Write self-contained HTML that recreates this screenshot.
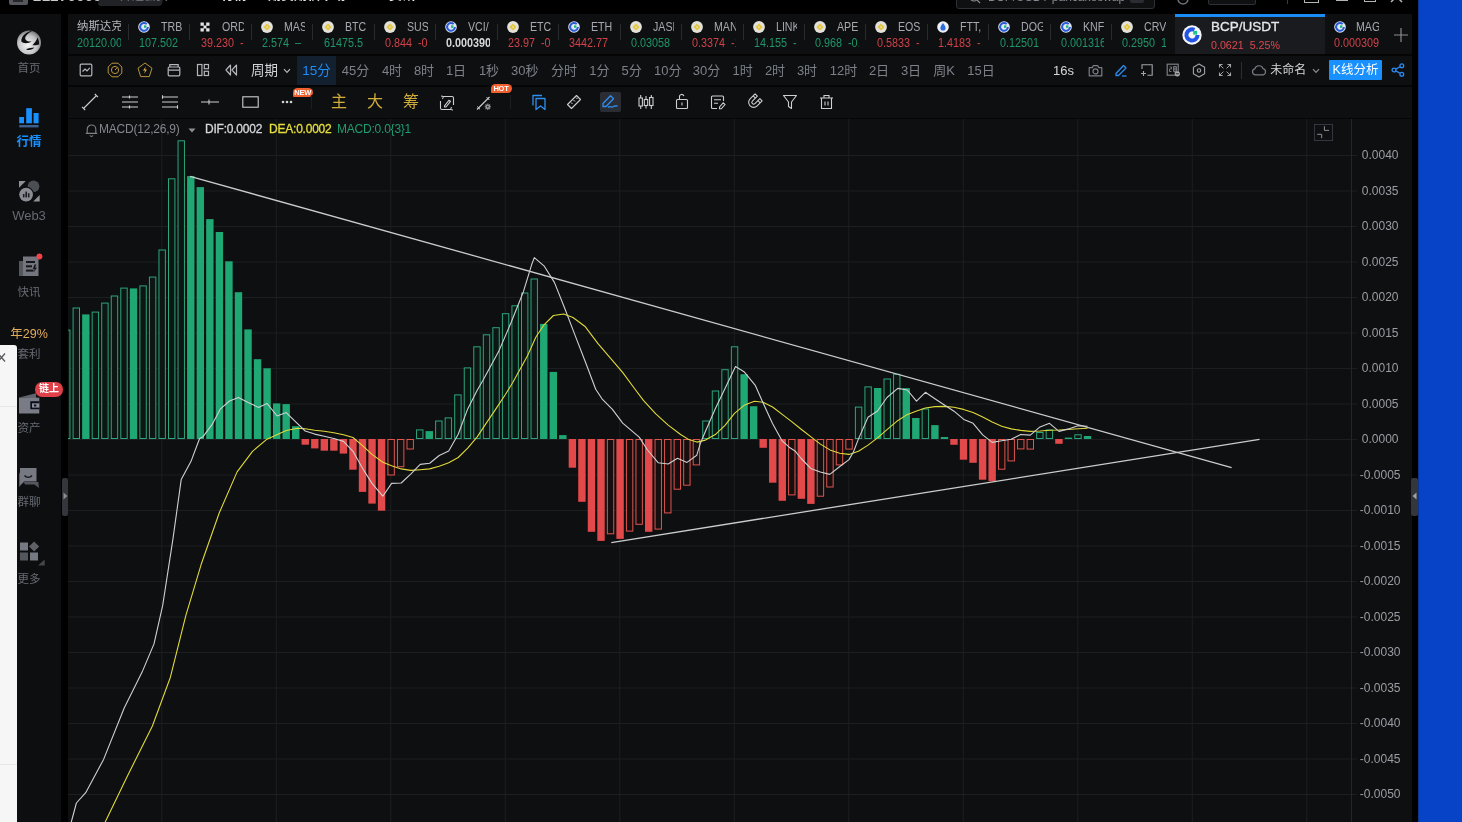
<!DOCTYPE html>
<html lang="zh-CN"><head><meta charset="utf-8"><title>MACD</title>
<style>
*{margin:0;padding:0;box-sizing:border-box}
html,body{width:1462px;height:822px;overflow:hidden;background:#000}
#wrap{position:absolute;left:0;top:0;width:1462px;height:822px;overflow:hidden;will-change:transform;transform:translateZ(0)}
body{position:relative;font-family:"Liberation Sans","Noto Sans CJK SC",sans-serif;color:#9b9ea5;font-size:12px}
.abs{position:absolute}
#side{position:absolute;left:0;top:13.5px;width:60.5px;height:808px;background:#0d0e10}
#main{position:absolute;left:68px;top:14px;width:1344px;height:808px;background:#0e0f11}
#blue{position:absolute;left:1418px;top:0;width:44px;height:822px;background:#0643c6;border-left:1.5px solid #0a3590}
.sl{position:absolute;left:0;width:58px;text-align:center;font-size:11.5px;margin-top:0.5px;color:#666a72;line-height:14px;white-space:nowrap}
.tab{position:absolute;top:14px;height:40px;overflow:hidden}
.tab .nm{position:absolute;top:4.5px;font-size:12.8px;color:#a6a9af;white-space:nowrap;line-height:16px;transform:scaleX(.83);transform-origin:0 50%}
.tab .pr{position:absolute;top:21.8px;font-size:12px;white-space:nowrap;line-height:14px;transform:scaleX(.9);transform-origin:0 50%}
.g{color:#1e9669}.r{color:#cf4249}.w{color:#d6d7da}
.dv{position:absolute;top:23.5px;width:1px;height:16.5px;background:#292b2f}
.per{position:absolute;top:56px;height:29px;line-height:29px;font-size:13px;color:#7d8189;white-space:nowrap;transform:translateX(-50%)}
.yl{position:absolute;left:1350.2px;width:60px;text-align:center;font-size:12px;line-height:16px;color:#9a9da3;white-space:nowrap}
.ic{position:absolute;overflow:visible}
</style></head><body><div id="wrap">
<div class="abs" style="left:9px;top:-13px;width:19px;height:18px;background:#55575c;border-radius:2px"></div><div class="abs" style="left:13px;top:-8px;width:10px;height:10px;background:#26272b"></div>
<div class="abs" style="left:33px;top:-11.6px;font-size:15px;font-weight:bold;color:#c8c9cc;line-height:16px;letter-spacing:0.3px;white-space:nowrap">21270008</div>
<div class="abs" style="left:100px;top:-14px;width:64px;height:20px;background:#202226;border-radius:3px;transform:skewX(-14deg)"></div>
<div class="abs" style="left:120px;top:-11px;font-size:12px;color:#7c7f86;line-height:14px;white-space:nowrap">开通会员</div>
<div class="abs" style="left:221px;top:-13px;font-size:13px;font-weight:bold;color:#e8e9eb;line-height:15px;white-space:nowrap">行情</div>
<div class="abs" style="left:268px;top:-13px;font-size:13px;font-weight:bold;color:#e8e9eb;line-height:15px;white-space:nowrap">期货期权市场</div>
<div class="abs" style="left:389px;top:-13px;font-size:13px;font-weight:bold;color:#e8e9eb;line-height:15px;white-space:nowrap">资讯</div>
<div class="abs" style="left:956px;top:-12px;width:199px;height:21px;border:1px solid #2e3035;border-radius:3px;background:#0f1012"></div>
<div class="abs" style="left:988px;top:-10px;font-size:12px;color:#85888f;line-height:14px;white-space:nowrap">BCP/USDT pancakeswap</div>
<div class="abs" style="left:1130px;top:-8px;width:14px;height:11px;background:#2a2c31;border-radius:2px"></div>
<svg class="ic" style="left:969px;top:-8px" width="12" height="12" viewBox="0 0 12 12"><circle cx="5" cy="5" r="4" stroke="#85888f" stroke-width="1.2" fill="none"/><path d="M8 8L11 11" stroke="#85888f" stroke-width="1.2"/></svg>
<svg class="ic" style="left:1175px;top:-10px" width="16" height="16" viewBox="0 0 16 16"><path d="M3 6V9A5 5 0 0 0 13 9V6" stroke="#6c6f76" stroke-width="1.5" fill="none"/><path d="M6 9.5H10" stroke="#6c6f76" stroke-width="1.3"/></svg>
<div class="abs" style="left:1208px;top:-12px;width:48px;height:17px;border:1px solid #2e3035;border-radius:2px;background:#0f1012"></div>
<div class="abs" style="left:1287px;top:0;width:1px;height:4px;background:#3a3c41"></div>
<div class="abs" style="left:1304px;top:-11px;width:15px;height:14px;border:1.5px solid #b4b5b8"></div>
<div class="abs" style="left:1336px;top:-0.5px;width:12px;height:1.5px;background:#b4b5b8"></div>
<div class="abs" style="left:1364px;top:-10px;width:12px;height:12px;border:1.5px solid #b4b5b8"></div>
<svg class="ic" style="left:1390px;top:-10.5px" width="13" height="13" viewBox="0 0 13 13"><path d="M1 1L12 12M12 1L1 12" stroke="#b4b5b8" stroke-width="1.5"/></svg>
<div id="main"></div>
<div class="abs" style="left:68px;top:54px;width:1344px;height:2px;background:#050506"></div>
<div class="abs" style="left:68px;top:84.5px;width:1344px;height:2px;background:#050506"></div>
<div class="abs" style="left:68px;top:118px;width:1344px;height:1px;background:#050506"></div>
<div id="side">
<svg class="ic" style="left:17px;top:16px" width="24" height="25" viewBox="0 0 24 25">
<defs><radialGradient id="lg" cx="0.45" cy="0.6" r="0.6"><stop offset="0" stop-color="#f4f4f4"/><stop offset="0.65" stop-color="#c4c4c6"/><stop offset="1" stop-color="#77787b"/></radialGradient></defs>
<circle cx="12" cy="12.5" r="12" fill="url(#lg)"/>
<path d="M16.8 0.2 C10 1.2 3.6 6 4.4 11.6 C6 13.8 11.5 13.8 14.5 11.6 C9.5 11.8 7.2 9.6 8.6 6.6 C10 4 13 1.6 16.8 0.2Z" fill="#0d0e10"/>
<path d="M20.6 7.6 C19.4 10.8 17.6 13.4 15.4 15.2 C18 15.6 20.6 15.2 22.2 14.2 C22.2 12 21.6 9.8 20.6 7.6Z" fill="#0d0e10"/>
<path d="M9 19.4 C11.5 18.2 14.5 18 17.4 17.6 C15.8 19.6 12 20.6 9 19.4Z" fill="#0d0e10"/>
</svg>
<div class="sl" style="top:47px">首页</div>
<svg class="ic" style="left:19px;top:94px" width="20" height="20" viewBox="0 0 20 20">
<rect x="0.2" y="9" width="4.8" height="6.3" fill="#1890ff"/><rect x="7.2" y="0.2" width="5.7" height="15.1" fill="#1890ff"/><rect x="14.6" y="5" width="5" height="10.3" fill="#1890ff"/>
<rect x="0.2" y="17" width="19.4" height="2.4" fill="#3d5f8f"/></svg>
<div class="sl" style="top:121px;color:#1890ff;font-weight:bold;font-size:12.5px">行情</div>
<svg class="ic" style="left:18.7px;top:167.1px" width="21" height="21" viewBox="0 0 21 21">
<path d="M0 0H6.8L0 6.8Z" fill="#8f9095"/><path d="M20.7 20.5H14.2L20.7 14Z" fill="#8f9095"/>
<circle cx="14.5" cy="5.3" r="5.9" fill="#4b4e53"/><circle cx="7.1" cy="13.6" r="8" fill="#0d0e10"/><circle cx="7.1" cy="13.6" r="6.9" fill="#8b8d95"/>
<rect x="3.9" y="13" width="1.6" height="3.4" fill="#1c1d21"/><rect x="6.4" y="10.6" width="1.6" height="5.8" fill="#1c1d21"/><rect x="8.9" y="12.2" width="1.6" height="4.2" fill="#1c1d21"/>
</svg>
<div class="sl" style="top:195px;font-size:13px">Web3</div>
<svg class="ic" style="left:19px;top:241px" width="24" height="22" viewBox="0 0 24 22">
<rect x="0" y="6" width="8" height="15" fill="#55575f"/><rect x="4" y="1.5" width="15.5" height="19.5" fill="#74767f"/>
<rect x="7" y="6" width="9" height="2" fill="#15161a"/><rect x="7" y="10.3" width="6" height="2" fill="#15161a"/><rect x="7" y="14.6" width="7.5" height="2" fill="#15161a"/>
<path d="M15.5 9.5L13.8 14H15.6L14.6 17.5L18 12.5H16L17.4 9.5Z" fill="#15161a"/>
<circle cx="20.4" cy="1.6" r="3" fill="#f0434a"/></svg>
<div class="sl" style="top:271px">快讯</div>
<div class="sl" style="top:313px;color:#e4ad5a;font-size:12.5px">年29%</div>
<div class="sl" style="top:333px">套利</div>
<svg class="ic" style="left:18.9px;top:379px" width="21" height="21" viewBox="0 0 21 21">
<path d="M0 4.6L17 0.3V5Z" fill="#62646d"/><rect x="0" y="4.6" width="20.3" height="15.9" fill="#797b85"/>
<rect x="11.3" y="8.2" width="9" height="8" fill="#0c0e1c"/><rect x="13" y="10.3" width="7.3" height="4.3" fill="#8a8c96"/><rect x="15" y="11.5" width="2.3" height="1.9" fill="#0c0e1c"/></svg>
<div class="sl" style="top:407px">资产</div>
<div class="abs" style="left:35px;top:368.7px;width:28px;height:14.5px;border-radius:7.2px;background:#e04048;color:#fff;font-size:10px;font-weight:bold;line-height:14px;text-align:center;z-index:5">链上</div>
<svg class="ic" style="left:19px;top:454px" width="20" height="20" viewBox="0 0 20 20">
<path d="M0 4V19L5 14H19.5V16L20 20L15.5 16.5H6" fill="#55575f"/>
<path d="M1 0H17.5V13.5H5L1 17Z" fill="#777982"/>
<path d="M5.5 7.5C7.5 10 11 10 13 7.5" stroke="#15161a" stroke-width="1.4" fill="none"/></svg>
<div class="sl" style="top:481px">群聊</div>
<svg class="ic" style="left:19px;top:528px" width="26" height="24" viewBox="0 0 26 24">
<rect x="1" y="0.5" width="8" height="8" fill="#777982"/><rect x="1" y="10.5" width="8" height="8" fill="#55575f"/><rect x="11" y="10.5" width="8" height="8" fill="#777982"/>
<path d="M15.1 -0.6L20.2 4.5L15.1 9.6L10 4.5Z" fill="#5e6066"/>
<path d="M25.7 17.5V23.4H19Z" fill="#45474d"/></svg>
<div class="sl" style="top:558px">更多</div>
</div>
<div class="abs" style="left:0;top:345px;width:17px;height:477px;background:#f6f6f7;border-top-right-radius:3px;z-index:6">
<svg class="ic" style="left:-2px;top:7px" width="8" height="12" viewBox="0 0 8 12"><path d="M0 1.5L7 9.5M7 1.5L0 9.5" stroke="#55575c" stroke-width="1.3" fill="none"/></svg>
<div class="abs" style="left:0;top:61px;width:17px;height:1px;background:#e6e6e8"></div>
<div class="abs" style="left:0;top:419px;width:17px;height:1px;background:#e6e6e8"></div>
</div>
<div class="abs" style="left:62px;top:478px;width:6px;height:38px;background:#34363c;border-radius:2px;z-index:7"><svg class="ic" style="left:1px;top:14px" width="5" height="8" viewBox="0 0 5 8"><path d="M0.5 0.5L4.5 4L0.5 7.5Z" fill="#8a8c92"/></svg></div>
<div class="abs" style="left:1411px;top:478px;width:7px;height:38px;background:#34363c;border-radius:2px;z-index:7"><svg class="ic" style="left:1px;top:14px" width="5" height="8" viewBox="0 0 5 8"><path d="M4.5 0.5L0.5 4L4.5 7.5Z" fill="#a0a2a8"/></svg></div>
<div class="tab" style="left:77px;width:43.7px"><div class="nm" style="left:0;top:3.8px;font-size:11.4px;color:#b4b6bb;transform:none">纳斯达克100</div><div class="pr g" style="left:0">20120.00</div></div>
<div class="dv" style="left:128.0px"></div>
<svg class="ic" style="left:138.0px;top:21.0px" width="12" height="12" viewBox="0 0 12 12"><circle cx="6" cy="6" r="5.8" fill="#dfe6f5"/><path d="M8.7 3.1A3.9 3.9 0 1 0 9.9 6" stroke="#2a5bd8" stroke-width="2" fill="none"/><rect x="6" y="4.4" width="2.4" height="2.4" fill="#1fb37d"/></svg>
<div class="tab" style="left:128.0px;width:54.5px"><div class="nm" style="left:33px">TRB</div><div class="pr g" style="left:11.3px">107.502</div></div>
<div class="dv" style="left:189.4px"></div>
<svg class="ic" style="left:199.4px;top:21.0px" width="12" height="12" viewBox="0 0 12 12"><path d="M1.5 1.5H4.8V4.8H1.5ZM7.2 1.5H10.5V4.8H7.2ZM1.5 7.2H4.8V10.5H1.5ZM7.2 7.2H10.5V10.5H7.2ZM4.5 4.5H7.5V7.5H4.5Z" fill="#e4e5e8"/></svg>
<div class="tab" style="left:189.4px;width:54.5px"><div class="nm" style="left:33px">ORD</div><div class="pr r" style="left:11.3px">39.230 &nbsp;-</div></div>
<div class="dv" style="left:250.9px"></div>
<svg class="ic" style="left:260.9px;top:21.0px" width="12" height="12" viewBox="0 0 12 12"><circle cx="6" cy="6" r="5.9" fill="#e3e1da"/><path d="M6 2.4L9.6 6L6 9.6L2.4 6Z" fill="#e2c640"/><path d="M6 4.9L7.1 6L6 7.1L4.9 6Z" fill="#efe6b0"/></svg>
<div class="tab" style="left:250.9px;width:54.5px"><div class="nm" style="left:33px">MASK</div><div class="pr g" style="left:11.3px">2.574 &nbsp;–</div></div>
<div class="dv" style="left:312.4px"></div>
<svg class="ic" style="left:322.4px;top:21.0px" width="12" height="12" viewBox="0 0 12 12"><circle cx="6" cy="6" r="5.9" fill="#e3e1da"/><path d="M6 2.4L9.6 6L6 9.6L2.4 6Z" fill="#e2c640"/><path d="M6 4.9L7.1 6L6 7.1L4.9 6Z" fill="#efe6b0"/></svg>
<div class="tab" style="left:312.4px;width:54.5px"><div class="nm" style="left:33px">BTC</div><div class="pr g" style="left:11.3px">61475.5</div></div>
<div class="dv" style="left:373.8px"></div>
<svg class="ic" style="left:383.8px;top:21.0px" width="12" height="12" viewBox="0 0 12 12"><circle cx="6" cy="6" r="5.9" fill="#e3e1da"/><path d="M6 2.4L9.6 6L6 9.6L2.4 6Z" fill="#e2c640"/><path d="M6 4.9L7.1 6L6 7.1L4.9 6Z" fill="#efe6b0"/></svg>
<div class="tab" style="left:373.8px;width:54.5px"><div class="nm" style="left:33px">SUSHI</div><div class="pr r" style="left:11.3px">0.844 &nbsp;-0.5</div></div>
<div class="dv" style="left:435.2px"></div>
<svg class="ic" style="left:445.2px;top:21.0px" width="12" height="12" viewBox="0 0 12 12"><circle cx="6" cy="6" r="5.8" fill="#dfe6f5"/><path d="M8.7 3.1A3.9 3.9 0 1 0 9.9 6" stroke="#2a5bd8" stroke-width="2" fill="none"/><rect x="6" y="4.4" width="2.4" height="2.4" fill="#1fb37d"/></svg>
<div class="tab" style="left:435.2px;width:54.5px"><div class="nm" style="left:33px">VCI/</div><div class="pr w" style="left:11.3px;font-weight:bold">0.000390</div></div>
<div class="dv" style="left:496.7px"></div>
<svg class="ic" style="left:506.7px;top:21.0px" width="12" height="12" viewBox="0 0 12 12"><circle cx="6" cy="6" r="5.9" fill="#e3e1da"/><path d="M6 2.4L9.6 6L6 9.6L2.4 6Z" fill="#e2c640"/><path d="M6 4.9L7.1 6L6 7.1L4.9 6Z" fill="#efe6b0"/></svg>
<div class="tab" style="left:496.7px;width:54.5px"><div class="nm" style="left:33px">ETC,</div><div class="pr r" style="left:11.3px">23.97 &nbsp;-0.5</div></div>
<div class="dv" style="left:558.2px"></div>
<svg class="ic" style="left:568.2px;top:21.0px" width="12" height="12" viewBox="0 0 12 12"><circle cx="6" cy="6" r="5.8" fill="#dfe6f5"/><path d="M8.7 3.1A3.9 3.9 0 1 0 9.9 6" stroke="#2a5bd8" stroke-width="2" fill="none"/><rect x="6" y="4.4" width="2.4" height="2.4" fill="#1fb37d"/></svg>
<div class="tab" style="left:558.2px;width:54.5px"><div class="nm" style="left:33px">ETH</div><div class="pr r" style="left:11.3px">3442.77</div></div>
<div class="dv" style="left:619.6px"></div>
<svg class="ic" style="left:629.6px;top:21.0px" width="12" height="12" viewBox="0 0 12 12"><circle cx="6" cy="6" r="5.9" fill="#e3e1da"/><path d="M6 2.4L9.6 6L6 9.6L2.4 6Z" fill="#e2c640"/><path d="M6 4.9L7.1 6L6 7.1L4.9 6Z" fill="#efe6b0"/></svg>
<div class="tab" style="left:619.6px;width:54.5px"><div class="nm" style="left:33px">JASM</div><div class="pr g" style="left:11.3px">0.03058</div></div>
<div class="dv" style="left:681.1px"></div>
<svg class="ic" style="left:691.1px;top:21.0px" width="12" height="12" viewBox="0 0 12 12"><circle cx="6" cy="6" r="5.9" fill="#e3e1da"/><path d="M6 2.4L9.6 6L6 9.6L2.4 6Z" fill="#e2c640"/><path d="M6 4.9L7.1 6L6 7.1L4.9 6Z" fill="#efe6b0"/></svg>
<div class="tab" style="left:681.1px;width:54.5px"><div class="nm" style="left:33px">MANA</div><div class="pr r" style="left:11.3px">0.3374 &nbsp;-1</div></div>
<div class="dv" style="left:742.5px"></div>
<svg class="ic" style="left:752.5px;top:21.0px" width="12" height="12" viewBox="0 0 12 12"><circle cx="6" cy="6" r="5.9" fill="#e3e1da"/><path d="M6 2.4L9.6 6L6 9.6L2.4 6Z" fill="#e2c640"/><path d="M6 4.9L7.1 6L6 7.1L4.9 6Z" fill="#efe6b0"/></svg>
<div class="tab" style="left:742.5px;width:54.5px"><div class="nm" style="left:33px">LINK</div><div class="pr g" style="left:11.3px">14.155 &nbsp;-</div></div>
<div class="dv" style="left:804.0px"></div>
<svg class="ic" style="left:814.0px;top:21.0px" width="12" height="12" viewBox="0 0 12 12"><circle cx="6" cy="6" r="5.9" fill="#e3e1da"/><path d="M6 2.4L9.6 6L6 9.6L2.4 6Z" fill="#e2c640"/><path d="M6 4.9L7.1 6L6 7.1L4.9 6Z" fill="#efe6b0"/></svg>
<div class="tab" style="left:804.0px;width:54.5px"><div class="nm" style="left:33px">APE</div><div class="pr g" style="left:11.3px">0.968 &nbsp;-0.5</div></div>
<div class="dv" style="left:865.4px"></div>
<svg class="ic" style="left:875.4px;top:21.0px" width="12" height="12" viewBox="0 0 12 12"><circle cx="6" cy="6" r="5.9" fill="#e3e1da"/><path d="M6 2.4L9.6 6L6 9.6L2.4 6Z" fill="#e2c640"/><path d="M6 4.9L7.1 6L6 7.1L4.9 6Z" fill="#efe6b0"/></svg>
<div class="tab" style="left:865.4px;width:54.5px"><div class="nm" style="left:33px">EOS</div><div class="pr r" style="left:11.3px">0.5833 &nbsp;-</div></div>
<div class="dv" style="left:926.9px"></div>
<svg class="ic" style="left:936.9px;top:21.0px" width="12" height="12" viewBox="0 0 12 12"><circle cx="6" cy="6" r="5.8" fill="#eef1f7"/><path d="M6 2C7.2 4 8.6 5.2 8.6 7A2.6 2.6 0 0 1 3.4 7C3.4 5.2 4.8 4 6 2Z" fill="#2d6be0"/></svg>
<div class="tab" style="left:926.9px;width:54.5px"><div class="nm" style="left:33px">FTT,</div><div class="pr r" style="left:11.3px">1.4183 &nbsp;-1</div></div>
<div class="dv" style="left:988.3px"></div>
<svg class="ic" style="left:998.3px;top:21.0px" width="12" height="12" viewBox="0 0 12 12"><circle cx="6" cy="6" r="5.8" fill="#dfe6f5"/><path d="M8.7 3.1A3.9 3.9 0 1 0 9.9 6" stroke="#2a5bd8" stroke-width="2" fill="none"/><rect x="6" y="4.4" width="2.4" height="2.4" fill="#1fb37d"/></svg>
<div class="tab" style="left:988.3px;width:54.5px"><div class="nm" style="left:33px">DOGE</div><div class="pr g" style="left:11.3px">0.12501</div></div>
<div class="dv" style="left:1049.8px"></div>
<svg class="ic" style="left:1059.8px;top:21.0px" width="12" height="12" viewBox="0 0 12 12"><circle cx="6" cy="6" r="5.8" fill="#dfe6f5"/><path d="M8.7 3.1A3.9 3.9 0 1 0 9.9 6" stroke="#2a5bd8" stroke-width="2" fill="none"/><rect x="6" y="4.4" width="2.4" height="2.4" fill="#1fb37d"/></svg>
<div class="tab" style="left:1049.8px;width:54.5px"><div class="nm" style="left:33px">KNF</div><div class="pr g" style="left:11.3px">0.001316</div></div>
<div class="dv" style="left:1111.2px"></div>
<svg class="ic" style="left:1121.2px;top:21.0px" width="12" height="12" viewBox="0 0 12 12"><circle cx="6" cy="6" r="5.9" fill="#e3e1da"/><path d="M6 2.4L9.6 6L6 9.6L2.4 6Z" fill="#e2c640"/><path d="M6 4.9L7.1 6L6 7.1L4.9 6Z" fill="#efe6b0"/></svg>
<div class="tab" style="left:1111.2px;width:54.5px"><div class="nm" style="left:33px">CRV</div><div class="pr g" style="left:11.3px">0.2950 &nbsp;1</div></div>
<div class="abs" style="left:1175px;top:14px;width:150px;height:40px;background:#191b1f"></div>
<div class="abs" style="left:1175px;top:13.6px;width:150px;height:3px;background:#1a8cf5"></div>
<svg class="ic" style="left:1182px;top:25px" width="20" height="20" viewBox="0 0 20 20"><circle cx="10" cy="10" r="9.7" fill="#f4f6fa"/><path d="M12.4 4.9A5.6 5.6 0 1 0 15.6 10" stroke="#2354e6" stroke-width="4" fill="none"/><rect x="11.2" y="5.8" width="3.8" height="3.8" fill="#17c98a"/></svg>
<div class="abs" style="left:1211px;top:19px;font-size:13.5px;color:#e6e7ea;line-height:16px;white-space:nowrap;-webkit-text-stroke:0.3px #e6e7ea">BCP/USDT</div>
<div class="abs" style="left:1211px;top:38px;font-size:11.5px;color:#e0474e;line-height:14px;white-space:nowrap;transform:scaleX(.93);transform-origin:0 50%">0.0621&nbsp; 5.25%</div>
<svg class="ic" style="left:1334.0px;top:21.0px" width="12" height="12" viewBox="0 0 12 12"><circle cx="6" cy="6" r="5.8" fill="#dfe6f5"/><path d="M8.7 3.1A3.9 3.9 0 1 0 9.9 6" stroke="#2a5bd8" stroke-width="2" fill="none"/><rect x="6" y="4.4" width="2.4" height="2.4" fill="#1fb37d"/></svg>
<div class="tab" style="left:1325px;width:53.6px"><div class="nm" style="left:31px">MAGA</div><div class="pr r" style="left:9px">0.0003095</div></div>
<svg class="ic" style="left:1393px;top:27px" width="16" height="16" viewBox="0 0 16 16"><path d="M8 1V15M1 8H15" stroke="#8a8d94" stroke-width="1.2"/></svg>
<svg class="ic" style="left:79.0px;top:63.3px" width="14" height="14" viewBox="0 0 14 14"><rect x="1.2" y="1.2" width="11.6" height="11.6" rx="1" stroke="#b4b6bb" stroke-width="1.2" fill="none"/><path d="M3.5 8.5L6 6L8 7.8L10.8 4.8" stroke="#b4b6bb" stroke-width="1.2" fill="none"/></svg>
<svg class="ic" style="left:107.0px;top:62.3px" width="16" height="16" viewBox="0 0 16 16"><path d="M5 1.2H11L14.8 5V11L11 14.8H5L1.2 11V5Z" stroke="#b8943a" stroke-width="1" fill="none"/><circle cx="8" cy="8" r="3.6" stroke="#b8943a" stroke-width="1" fill="none"/><path d="M8 8L10 5.8" stroke="#b8943a" stroke-width="1" fill="none"/></svg>
<svg class="ic" style="left:137.0px;top:62.3px" width="16" height="16" viewBox="0 0 16 16"><path d="M8 1L15 6.2L12.3 14.6H3.7L1 6.2Z" stroke="#b8943a" stroke-width="1" fill="none" stroke-linejoin="round"/><path d="M8.8 4.5L6 8.6H8L7.2 11.8L10 7.6H8Z" fill="#e0b244"/></svg>
<svg class="ic" style="left:167.0px;top:63.3px" width="14" height="14" viewBox="0 0 14 14"><rect x="1.2" y="4" width="11.6" height="8.8" rx="1" stroke="#b4b6bb" stroke-width="1.2" fill="none"/><path d="M2.8 4V1.6H11.2V4M1.2 7.2H12.8" stroke="#b4b6bb" stroke-width="1.2" fill="none"/></svg>
<svg class="ic" style="left:195.5px;top:63.3px" width="14" height="14" viewBox="0 0 14 14"><rect x="1.5" y="1.5" width="4.4" height="11" stroke="#b4b6bb" stroke-width="1.2" fill="none"/><rect x="8.3" y="1.5" width="4.2" height="4.2" stroke="#b4b6bb" stroke-width="1.2" fill="none"/><rect x="8.3" y="8.3" width="4.2" height="4.2" stroke="#b4b6bb" stroke-width="1.2" fill="none"/></svg>
<svg class="ic" style="left:224.0px;top:63.3px" width="14" height="14" viewBox="0 0 14 14"><path d="M6.5 2L2 7L6.5 12ZM12.5 2L8 7L12.5 12Z" stroke="#b4b6bb" stroke-width="1.2" fill="none" stroke-linejoin="round"/></svg>
<div class="per" style="left:264.5px;color:#d3d5d9;font-size:13.5px">周期</div>
<svg class="ic" style="left:283.0px;top:67.8px" width="8" height="6" viewBox="0 0 8 6"><path d="M1 1.2L4 4.4L7 1.2" stroke="#b4b6bb" stroke-width="1.2" fill="none"/></svg>
<div class="abs" style="left:297px;top:56px;width:39px;height:29px;background:#13202f"></div>
<div class="per" style="left:316.5px;color:#1e8df5;font-size:13.5px">15分</div>
<div class="per" style="left:355.6px">45分</div>
<div class="per" style="left:392px">4时</div>
<div class="per" style="left:424px">8时</div>
<div class="per" style="left:456px">1日</div>
<div class="per" style="left:489px">1秒</div>
<div class="per" style="left:524.7px">30秒</div>
<div class="per" style="left:563.9px">分时</div>
<div class="per" style="left:599.4px">1分</div>
<div class="per" style="left:631.6px">5分</div>
<div class="per" style="left:667.7px">10分</div>
<div class="per" style="left:706.5px">30分</div>
<div class="per" style="left:742.6px">1时</div>
<div class="per" style="left:775px">2时</div>
<div class="per" style="left:807px">3时</div>
<div class="per" style="left:843.5px">12时</div>
<div class="per" style="left:879px">2日</div>
<div class="per" style="left:911px">3日</div>
<div class="per" style="left:944px">周K</div>
<div class="per" style="left:981px">15日</div>
<div class="per" style="left:1063.5px;color:#d5d7da;font-size:13px">16s</div>
<svg class="ic" style="left:1088.2px;top:63.8px" width="15" height="13" viewBox="0 0 15 13"><path d="M1.2 3.6H4.2L5.4 1.6H9.6L10.8 3.6H13.8V11.8H1.2Z" stroke="#7a7d85" stroke-width="1.2" fill="none" stroke-linejoin="round"/><circle cx="7.5" cy="7.4" r="2.5" stroke="#7a7d85" stroke-width="1.2" fill="none"/></svg>
<svg class="ic" style="left:1114.0px;top:63.3px" width="14" height="14" viewBox="0 0 14 14"><path d="M2 10.5L9.5 2.5L12 5L4.5 12.5H2Z" stroke="#2b8cf0" stroke-width="1.3" fill="none" stroke-linejoin="round"/><path d="M8 13H12.5" stroke="#2b8cf0" stroke-width="1.3" fill="none"/></svg>
<svg class="ic" style="left:1139.8px;top:63.3px" width="14" height="14" viewBox="0 0 14 14"><path d="M2 6V1.8H12.2V12.2H7.5" stroke="#a2a4aa" stroke-width="1.1" fill="none"/><path d="M3.5 8V13M1 10.5H6" stroke="#a2a4aa" stroke-width="1.1" fill="none"/></svg>
<svg class="ic" style="left:1165.5px;top:63.3px" width="15" height="14" viewBox="0 0 15 14"><rect x="1.2" y="1.2" width="11" height="11" stroke="#7a7d85" stroke-width="1.2" fill="none"/><path d="M3.5 4H5.5V6H3.5V8.5H5.5M7.5 3.5H10.5V8.5H7.5ZM7.5 6H10.5M9 3V10" stroke="#7a7d85" stroke-width="0.9" fill="none"/><circle cx="11.3" cy="10.8" r="2.6" fill="#a9abb0"/><rect x="9.8" y="10.3" width="3" height="1" fill="#222"/></svg>
<svg class="ic" style="left:1191.8px;top:62.8px" width="14" height="15" viewBox="0 0 14 15"><path d="M7 1L12.6 4.2V10.8L7 14L1.4 10.8V4.2Z" stroke="#a2a4aa" stroke-width="1.1" fill="none" stroke-linejoin="round"/><circle cx="7" cy="7.5" r="1.7" stroke="#a2a4aa" stroke-width="1.1" fill="none"/></svg>
<svg class="ic" style="left:1218.0px;top:63.3px" width="14" height="14" viewBox="0 0 14 14"><path d="M1.5 4.6V1.5H4.6M9.4 1.5H12.5V4.6M12.5 9.4V12.5H9.4M4.6 12.5H1.5V9.4" stroke="#a2a4aa" stroke-width="1.1" fill="none"/><path d="M5.4 5.4L2 2M8.6 5.4L12 2M8.6 8.6L12 12M5.4 8.6L2 12" stroke="#a2a4aa" stroke-width="1"/></svg>
<div class="abs" style="left:1241px;top:62px;width:1px;height:17px;background:#2c2e33"></div>
<svg class="ic" style="left:1250.5px;top:63.8px" width="16" height="12" viewBox="0 0 16 12"><path d="M4.2 10.8A3 3 0 0 1 3.8 4.9A4.3 4.3 0 0 1 12 4.6A3.2 3.2 0 0 1 12.2 10.8Z" stroke="#7a7d85" stroke-width="1.2" fill="none" stroke-linejoin="round"/></svg>
<div class="per" style="left:1288.3px;color:#d3d5d9;font-size:12px">未命名</div>
<svg class="ic" style="left:1312.0px;top:67.8px" width="8" height="6" viewBox="0 0 8 6"><path d="M1 1.2L4 4.4L7 1.2" stroke="#8d9097" stroke-width="1.2" fill="none"/></svg>
<div class="abs" style="left:1329px;top:60px;width:53px;height:19.5px;background:#1890ff;border-radius:1px;color:#fff;font-size:12.5px;line-height:21px;text-align:center;white-space:nowrap">K线分析</div>
<svg class="ic" style="left:1391.0px;top:63.3px" width="14" height="14" viewBox="0 0 14 14"><circle cx="10.8" cy="2.8" r="1.9" stroke="#2b8cf0" stroke-width="1.3" fill="none"/><circle cx="10.8" cy="11.2" r="1.9" stroke="#2b8cf0" stroke-width="1.3" fill="none"/><circle cx="3" cy="7" r="1.9" stroke="#2b8cf0" stroke-width="1.3" fill="none"/><path d="M4.7 6.1L9.1 3.7M4.7 7.9L9.1 10.3" stroke="#2b8cf0" stroke-width="1.3" fill="none"/></svg>
<svg class="ic" style="left:81.4px;top:93.0px" width="18" height="18" viewBox="0 0 18 18"><path d="M2.5 15.5L15.5 2.5" stroke="#cdcfd3" stroke-width="1.1" fill="none"/><path d="M1 13.8L4.2 17M13.8 1L17 4.2" stroke="#cdcfd3" stroke-width="1.1" fill="none"/></svg>
<svg class="ic" style="left:121.0px;top:95.0px" width="18" height="14" viewBox="0 0 18 14"><path d="M1 2H17M1 7H17M1 12H17" stroke="#cdcfd3" stroke-width="1.1" fill="none"/><path d="M8.5 0.5V3.5M8.5 10.5V13.5" stroke="#cdcfd3" stroke-width="1.1" fill="none"/></svg>
<svg class="ic" style="left:161.0px;top:95.0px" width="18" height="14" viewBox="0 0 18 14"><path d="M1 2H17M1 7H17M1 12H17" stroke="#cdcfd3" stroke-width="1.1" fill="none"/><path d="M1.5 0.3V3.7M16.5 10.3V13.7" stroke="#cdcfd3" stroke-width="1.1" fill="none"/></svg>
<svg class="ic" style="left:201.0px;top:98.0px" width="18" height="8" viewBox="0 0 18 8"><path d="M0 4H18M8 1.5V6.5" stroke="#cdcfd3" stroke-width="1.1" fill="none"/></svg>
<svg class="ic" style="left:241.5px;top:96.3px" width="17" height="12" viewBox="0 0 17 12"><rect x="0.8" y="0.8" width="15.4" height="10.4" stroke="#cdcfd3" stroke-width="1.1" fill="none"/></svg>
<svg class="ic" style="left:281.0px;top:100.0px" width="12" height="4" viewBox="0 0 12 4"><circle cx="2" cy="2" r="1.3" fill="#cfd1d5"/><circle cx="6" cy="2" r="1.3" fill="#cfd1d5"/><circle cx="10" cy="2" r="1.3" fill="#cfd1d5"/></svg>
<div class="abs" style="left:292.5px;top:87.5px;width:20.5px;height:9px;border-radius:4.5px 4.5px 4.5px 1px;background:#f2602f;color:#fff;font-size:7.5px;font-weight:bold;line-height:9px;text-align:center;letter-spacing:-0.2px">NEW</div>
<div class="abs" style="left:311px;top:95px;width:1px;height:14px;background:#1d1f23"></div>
<div class="abs" style="left:330px;top:91px;width:18px;text-align:center;font-size:16px;line-height:22px;color:#d0ac3a">主</div>
<div class="abs" style="left:366px;top:91px;width:18px;text-align:center;font-size:16px;line-height:22px;color:#d0ac3a">大</div>
<div class="abs" style="left:402px;top:91px;width:18px;text-align:center;font-size:16px;line-height:22px;color:#d0ac3a">筹</div>
<svg class="ic" style="left:439.0px;top:94.5px" width="16" height="16" viewBox="0 0 16 16"><path d="M4 1.5H13A1.5 1.5 0 0 1 14.5 3V10M12 14.5H3A1.5 1.5 0 0 1 1.5 13V6" stroke="#cdcfd3" stroke-width="1.1" fill="none"/><path d="M5.5 10.8L10 5.2L11.5 6.4L7 12H5.5Z" stroke="#cdcfd3" stroke-width="1.1" fill="none" stroke-width="1"/><path d="M2 1L4.5 1.5L3.5 4M14 15L11.5 14.5L12.5 12" stroke="#cfd1d5" stroke-width="1" fill="none"/></svg>
<svg class="ic" style="left:474.8px;top:94.5px" width="18" height="16" viewBox="0 0 18 16"><path d="M2 14.5L14.5 2" stroke="#cdcfd3" stroke-width="1.1" fill="none"/><path d="M2.2 11.5L5 14.3M11.6 2.2L14.4 5" stroke="#cdcfd3" stroke-width="1"/><circle cx="12.8" cy="11.8" r="2.4" fill="#8e9096"/><path d="M12.8 8.6V15M9.6 11.8H16M10.5 9.5L15.1 14.1M15.1 9.5L10.5 14.1" stroke="#8e9096" stroke-width="1.1"/><circle cx="12.8" cy="11.8" r="0.8" fill="#0e0f11"/></svg>
<div class="abs" style="left:490.5px;top:83.6px;width:21px;height:9.5px;border-radius:4.5px 4.5px 4.5px 1px;background:#f2602f;color:#fff;font-size:7.5px;font-weight:bold;line-height:9.5px;text-align:center;letter-spacing:-0.2px">HOT</div>
<div class="abs" style="left:510px;top:95px;width:1px;height:14px;background:#1d1f23"></div>
<svg class="ic" style="left:531.0px;top:93.5px" width="16" height="17" viewBox="0 0 16 17"><path d="M5 4.5H14V15.5L9.5 12L5 15.5Z" stroke="#2f8ff0" stroke-width="1.3" fill="none" stroke-linejoin="round"/><path d="M2 11.5V1.5H11" stroke="#2f8ff0" stroke-width="1.3" fill="none"/></svg>
<svg class="ic" style="left:565.5px;top:94.0px" width="16" height="16" viewBox="0 0 16 16"><path d="M1.5 10.5L10.5 1.5L14.5 5.5L5.5 14.5Z" stroke="#cdcfd3" stroke-width="1.1" fill="none" stroke-linejoin="round"/><path d="M5 8.5L6.5 10M7.5 6L9 7.5M10 3.5L11.5 5" stroke="#cfd1d5" stroke-width="1"/></svg>
<div class="abs" style="left:599.5px;top:92px;width:21px;height:20px;background:#2a2d33;border-radius:2px"></div>
<svg class="ic" style="left:600.6px;top:94.0px" width="18" height="16" viewBox="0 0 18 16"><path d="M2 9.5L9.5 1.8L12.5 4.8L5 12.5H2Z" stroke="#2f8ff0" stroke-width="1.3" fill="none" stroke-linejoin="round"/><path d="M7 13.5C9 11 10.5 14.5 12.5 12.5C14 11 15 13 16.5 11.5" stroke="#2f8ff0" stroke-width="1.3" fill="none"/></svg>
<svg class="ic" style="left:637.3px;top:94.0px" width="18" height="16" viewBox="0 0 18 16"><rect x="2" y="4" width="3.4" height="8" stroke="#cdcfd3" stroke-width="1.1" fill="none"/><path d="M3.7 1V4M3.7 12V15" stroke="#cdcfd3" stroke-width="1.1" fill="none"/><rect x="7.3" y="5.5" width="3.4" height="6" stroke="#cdcfd3" stroke-width="1.1" fill="none"/><path d="M9 2V5.5M9 11.5V14.5" stroke="#cdcfd3" stroke-width="1.1" fill="none"/><rect x="12.6" y="3.5" width="3.4" height="8" stroke="#cdcfd3" stroke-width="1.1" fill="none"/><path d="M14.3 1V3.5M14.3 11.5V15" stroke="#cdcfd3" stroke-width="1.1" fill="none"/></svg>
<svg class="ic" style="left:675.4px;top:94.0px" width="14" height="16" viewBox="0 0 14 16"><rect x="1.5" y="5.5" width="11" height="9" rx="1" stroke="#cdcfd3" stroke-width="1.1" fill="none"/><path d="M4.5 5.5V3A2 2 0 0 1 8.8 2.2" stroke="#cdcfd3" stroke-width="1.1" fill="none"/><path d="M7 8.5V11.5" stroke="#cdcfd3" stroke-width="1.1" fill="none"/></svg>
<svg class="ic" style="left:710.0px;top:94.5px" width="16" height="15" viewBox="0 0 16 15"><path d="M13.5 6V2A1 1 0 0 0 12.5 1H2.5A1 1 0 0 0 1.5 2V12.5A1 1 0 0 0 2.5 13.5H7" stroke="#cdcfd3" stroke-width="1.1" fill="none"/><path d="M4 4.8H11M4 8.2H8" stroke="#cdcfd3" stroke-width="1.1" fill="none"/><path d="M9.5 12L13.2 7.8L15 9.6L11.3 13.8H9.5Z" stroke="#cdcfd3" stroke-width="1.1" fill="none" stroke-width="1"/></svg>
<svg class="ic" style="left:746.0px;top:94.0px" width="16" height="16" viewBox="0 0 16 16"><g transform="rotate(45 8 8)"><path d="M3 1.5V8.5A5 5 0 0 0 13 8.5V1.5H9.8V8.5A1.8 1.8 0 0 1 6.2 8.5V1.5Z" stroke="#cdcfd3" stroke-width="1.1" fill="none" stroke-linejoin="round"/><path d="M3 4.2H6.2M9.8 4.2H13" stroke="#cdcfd3" stroke-width="1.1" fill="none"/></g></svg>
<svg class="ic" style="left:782.0px;top:94.0px" width="16" height="16" viewBox="0 0 16 16"><path d="M1.5 1.5H14.5L9.5 8V14.5L6.5 12.5V8Z" stroke="#cdcfd3" stroke-width="1.1" fill="none" stroke-linejoin="round"/></svg>
<svg class="ic" style="left:818.8px;top:94.0px" width="15" height="16" viewBox="0 0 15 16"><path d="M1 4H14M5 4V1.5H10V4M2.5 4V14.5H12.5V4M6 7.5V11.5M9 7.5V11.5" stroke="#cdcfd3" stroke-width="1.1" fill="none"/></svg>
<svg class="abs" style="left:0;top:0" width="1462" height="822" viewBox="0 0 1462 822">
<defs><clipPath id="cp"><rect x="68" y="119" width="1283" height="703"/></clipPath></defs>
<line x1="161.8" y1="119" x2="161.8" y2="822" stroke="#1c1e21" stroke-width="1"/>
<line x1="276.3" y1="119" x2="276.3" y2="822" stroke="#1c1e21" stroke-width="1"/>
<line x1="390.8" y1="119" x2="390.8" y2="822" stroke="#1c1e21" stroke-width="1"/>
<line x1="505.3" y1="119" x2="505.3" y2="822" stroke="#1c1e21" stroke-width="1"/>
<line x1="619.8" y1="119" x2="619.8" y2="822" stroke="#1c1e21" stroke-width="1"/>
<line x1="734.3" y1="119" x2="734.3" y2="822" stroke="#1c1e21" stroke-width="1"/>
<line x1="848.8" y1="119" x2="848.8" y2="822" stroke="#1c1e21" stroke-width="1"/>
<line x1="963.3" y1="119" x2="963.3" y2="822" stroke="#1c1e21" stroke-width="1"/>
<line x1="1077.8" y1="119" x2="1077.8" y2="822" stroke="#1c1e21" stroke-width="1"/>
<line x1="1192.3" y1="119" x2="1192.3" y2="822" stroke="#1c1e21" stroke-width="1"/>
<line x1="1306.8" y1="119" x2="1306.8" y2="822" stroke="#1c1e21" stroke-width="1"/>
<line x1="68" y1="794.5" x2="1357" y2="794.5" stroke="#1c1e21" stroke-width="1"/>
<line x1="68" y1="759.0" x2="1357" y2="759.0" stroke="#1c1e21" stroke-width="1"/>
<line x1="68" y1="723.5" x2="1357" y2="723.5" stroke="#1c1e21" stroke-width="1"/>
<line x1="68" y1="688.0" x2="1357" y2="688.0" stroke="#1c1e21" stroke-width="1"/>
<line x1="68" y1="652.5" x2="1357" y2="652.5" stroke="#1c1e21" stroke-width="1"/>
<line x1="68" y1="617.0" x2="1357" y2="617.0" stroke="#1c1e21" stroke-width="1"/>
<line x1="68" y1="581.5" x2="1357" y2="581.5" stroke="#1c1e21" stroke-width="1"/>
<line x1="68" y1="546.0" x2="1357" y2="546.0" stroke="#1c1e21" stroke-width="1"/>
<line x1="68" y1="510.5" x2="1357" y2="510.5" stroke="#1c1e21" stroke-width="1"/>
<line x1="68" y1="475.0" x2="1357" y2="475.0" stroke="#1c1e21" stroke-width="1"/>
<line x1="68" y1="439.5" x2="1357" y2="439.5" stroke="#1c1e21" stroke-width="1"/>
<line x1="68" y1="404.0" x2="1357" y2="404.0" stroke="#1c1e21" stroke-width="1"/>
<line x1="68" y1="368.5" x2="1357" y2="368.5" stroke="#1c1e21" stroke-width="1"/>
<line x1="68" y1="333.0" x2="1357" y2="333.0" stroke="#1c1e21" stroke-width="1"/>
<line x1="68" y1="297.5" x2="1357" y2="297.5" stroke="#1c1e21" stroke-width="1"/>
<line x1="68" y1="262.0" x2="1357" y2="262.0" stroke="#1c1e21" stroke-width="1"/>
<line x1="68" y1="226.5" x2="1357" y2="226.5" stroke="#1c1e21" stroke-width="1"/>
<line x1="68" y1="191.0" x2="1357" y2="191.0" stroke="#1c1e21" stroke-width="1"/>
<line x1="68" y1="155.5" x2="1357" y2="155.5" stroke="#1c1e21" stroke-width="1"/>
<line x1="1351.5" y1="119" x2="1351.5" y2="822" stroke="#24262a" stroke-width="1"/>
<g clip-path="url(#cp)">
<rect x="63.56" y="330.10" width="6.4" height="108.40" fill="#0c1713" stroke="#2ea57c" stroke-width="1"/>
<rect x="73.10" y="308.00" width="6.4" height="130.50" fill="#0c1713" stroke="#2ea57c" stroke-width="1"/>
<rect x="82.14" y="314.40" width="7.4" height="124.60" fill="#1fa873"/>
<rect x="92.18" y="312.10" width="6.4" height="126.40" fill="#0c1713" stroke="#2ea57c" stroke-width="1"/>
<rect x="101.72" y="303.10" width="6.4" height="135.40" fill="#0c1713" stroke="#2ea57c" stroke-width="1"/>
<rect x="111.26" y="296.00" width="6.4" height="142.50" fill="#0c1713" stroke="#2ea57c" stroke-width="1"/>
<rect x="120.80" y="288.10" width="6.4" height="150.40" fill="#0c1713" stroke="#2ea57c" stroke-width="1"/>
<rect x="129.84" y="288.40" width="7.4" height="150.60" fill="#1fa873"/>
<rect x="139.88" y="285.90" width="6.4" height="152.60" fill="#0c1713" stroke="#2ea57c" stroke-width="1"/>
<rect x="149.42" y="277.10" width="6.4" height="161.40" fill="#0c1713" stroke="#2ea57c" stroke-width="1"/>
<rect x="158.96" y="250.00" width="6.4" height="188.50" fill="#0c1713" stroke="#2ea57c" stroke-width="1"/>
<rect x="168.50" y="178.80" width="6.4" height="259.70" fill="#0c1713" stroke="#2ea57c" stroke-width="1"/>
<rect x="178.04" y="140.80" width="6.4" height="297.70" fill="#0c1713" stroke="#2ea57c" stroke-width="1"/>
<rect x="187.08" y="176.10" width="7.4" height="262.90" fill="#1fa873"/>
<rect x="196.62" y="187.10" width="7.4" height="251.90" fill="#1fa873"/>
<rect x="206.16" y="219.10" width="7.4" height="219.90" fill="#1fa873"/>
<rect x="215.70" y="232.00" width="7.4" height="207.00" fill="#1fa873"/>
<rect x="225.24" y="261.30" width="7.4" height="177.70" fill="#1fa873"/>
<rect x="234.78" y="292.20" width="7.4" height="146.80" fill="#1fa873"/>
<rect x="244.32" y="329.40" width="7.4" height="109.60" fill="#1fa873"/>
<rect x="253.86" y="359.20" width="7.4" height="79.80" fill="#1fa873"/>
<rect x="263.40" y="368.30" width="7.4" height="70.70" fill="#1fa873"/>
<rect x="272.94" y="403.40" width="7.4" height="35.60" fill="#1fa873"/>
<rect x="282.48" y="404.10" width="7.4" height="34.90" fill="#1fa873"/>
<rect x="292.02" y="426.20" width="7.4" height="12.80" fill="#1fa873"/>
<rect x="301.56" y="439.00" width="7.4" height="5.70" fill="#e2494b"/>
<rect x="311.10" y="439.00" width="7.4" height="9.40" fill="#e2494b"/>
<rect x="320.64" y="439.00" width="7.4" height="11.70" fill="#e2494b"/>
<rect x="330.18" y="439.00" width="7.4" height="11.70" fill="#e2494b"/>
<rect x="339.72" y="439.00" width="7.4" height="14.60" fill="#e2494b"/>
<rect x="349.26" y="439.00" width="7.4" height="30.70" fill="#e2494b"/>
<rect x="358.80" y="439.00" width="7.4" height="52.90" fill="#e2494b"/>
<rect x="368.34" y="439.00" width="7.4" height="64.60" fill="#e2494b"/>
<rect x="377.88" y="439.00" width="7.4" height="71.70" fill="#e2494b"/>
<rect x="387.92" y="439.50" width="6.4" height="35.50" fill="#160e0f" stroke="#e0564f" stroke-width="1"/>
<rect x="397.46" y="439.50" width="6.4" height="27.20" fill="#160e0f" stroke="#e0564f" stroke-width="1"/>
<rect x="407.00" y="439.50" width="6.4" height="9.50" fill="#160e0f" stroke="#e0564f" stroke-width="1"/>
<rect x="416.54" y="429.90" width="6.4" height="8.60" fill="#0c1713" stroke="#2ea57c" stroke-width="1"/>
<rect x="425.58" y="431.10" width="7.4" height="7.90" fill="#1fa873"/>
<rect x="435.62" y="421.00" width="6.4" height="17.50" fill="#0c1713" stroke="#2ea57c" stroke-width="1"/>
<rect x="445.16" y="417.90" width="6.4" height="20.60" fill="#0c1713" stroke="#2ea57c" stroke-width="1"/>
<rect x="454.70" y="394.90" width="6.4" height="43.60" fill="#0c1713" stroke="#2ea57c" stroke-width="1"/>
<rect x="464.24" y="367.90" width="6.4" height="70.60" fill="#0c1713" stroke="#2ea57c" stroke-width="1"/>
<rect x="473.78" y="346.80" width="6.4" height="91.70" fill="#0c1713" stroke="#2ea57c" stroke-width="1"/>
<rect x="483.32" y="334.80" width="6.4" height="103.70" fill="#0c1713" stroke="#2ea57c" stroke-width="1"/>
<rect x="492.86" y="327.70" width="6.4" height="110.80" fill="#0c1713" stroke="#2ea57c" stroke-width="1"/>
<rect x="502.40" y="313.70" width="6.4" height="124.80" fill="#0c1713" stroke="#2ea57c" stroke-width="1"/>
<rect x="511.94" y="305.80" width="6.4" height="132.70" fill="#0c1713" stroke="#2ea57c" stroke-width="1"/>
<rect x="521.48" y="293.00" width="6.4" height="145.50" fill="#0c1713" stroke="#2ea57c" stroke-width="1"/>
<rect x="531.02" y="279.00" width="6.4" height="159.50" fill="#0c1713" stroke="#2ea57c" stroke-width="1"/>
<rect x="540.06" y="323.90" width="7.4" height="115.10" fill="#1fa873"/>
<rect x="549.60" y="371.90" width="7.4" height="67.10" fill="#1fa873"/>
<rect x="559.14" y="435.10" width="7.4" height="3.90" fill="#1fa873"/>
<rect x="568.68" y="439.00" width="7.4" height="28.70" fill="#e2494b"/>
<rect x="578.22" y="439.00" width="7.4" height="62.80" fill="#e2494b"/>
<rect x="587.76" y="439.00" width="7.4" height="92.80" fill="#e2494b"/>
<rect x="597.30" y="439.00" width="7.4" height="101.90" fill="#e2494b"/>
<rect x="607.34" y="439.50" width="6.4" height="94.30" fill="#160e0f" stroke="#e0564f" stroke-width="1"/>
<rect x="616.38" y="439.00" width="7.4" height="99.90" fill="#e2494b"/>
<rect x="626.42" y="439.50" width="6.4" height="91.60" fill="#160e0f" stroke="#e0564f" stroke-width="1"/>
<rect x="635.96" y="439.50" width="6.4" height="84.80" fill="#160e0f" stroke="#e0564f" stroke-width="1"/>
<rect x="645.00" y="439.00" width="7.4" height="92.80" fill="#e2494b"/>
<rect x="655.04" y="439.50" width="6.4" height="89.60" fill="#160e0f" stroke="#e0564f" stroke-width="1"/>
<rect x="664.58" y="439.50" width="6.4" height="73.40" fill="#160e0f" stroke="#e0564f" stroke-width="1"/>
<rect x="674.12" y="439.50" width="6.4" height="49.70" fill="#160e0f" stroke="#e0564f" stroke-width="1"/>
<rect x="683.66" y="439.50" width="6.4" height="45.70" fill="#160e0f" stroke="#e0564f" stroke-width="1"/>
<rect x="693.20" y="439.50" width="6.4" height="25.40" fill="#160e0f" stroke="#e0564f" stroke-width="1"/>
<rect x="702.74" y="421.00" width="6.4" height="17.50" fill="#0c1713" stroke="#2ea57c" stroke-width="1"/>
<rect x="712.28" y="391.00" width="6.4" height="47.50" fill="#0c1713" stroke="#2ea57c" stroke-width="1"/>
<rect x="721.82" y="369.70" width="6.4" height="68.80" fill="#0c1713" stroke="#2ea57c" stroke-width="1"/>
<rect x="731.36" y="346.80" width="6.4" height="91.70" fill="#0c1713" stroke="#2ea57c" stroke-width="1"/>
<rect x="740.40" y="374.20" width="7.4" height="64.80" fill="#1fa873"/>
<rect x="749.94" y="406.20" width="7.4" height="32.80" fill="#1fa873"/>
<rect x="759.48" y="439.00" width="7.4" height="8.80" fill="#e2494b"/>
<rect x="769.02" y="439.00" width="7.4" height="43.70" fill="#e2494b"/>
<rect x="778.56" y="439.00" width="7.4" height="61.80" fill="#e2494b"/>
<rect x="788.60" y="439.50" width="6.4" height="55.40" fill="#160e0f" stroke="#e0564f" stroke-width="1"/>
<rect x="797.64" y="439.00" width="7.4" height="59.80" fill="#e2494b"/>
<rect x="807.18" y="439.00" width="7.4" height="64.90" fill="#e2494b"/>
<rect x="817.22" y="439.50" width="6.4" height="56.70" fill="#160e0f" stroke="#e0564f" stroke-width="1"/>
<rect x="826.76" y="439.50" width="6.4" height="47.50" fill="#160e0f" stroke="#e0564f" stroke-width="1"/>
<rect x="836.30" y="439.50" width="6.4" height="25.40" fill="#160e0f" stroke="#e0564f" stroke-width="1"/>
<rect x="845.84" y="439.50" width="6.4" height="9.60" fill="#160e0f" stroke="#e0564f" stroke-width="1"/>
<rect x="855.38" y="407.10" width="6.4" height="31.40" fill="#0c1713" stroke="#2ea57c" stroke-width="1"/>
<rect x="864.92" y="386.90" width="6.4" height="51.60" fill="#0c1713" stroke="#2ea57c" stroke-width="1"/>
<rect x="873.96" y="388.00" width="7.4" height="51.00" fill="#1fa873"/>
<rect x="884.00" y="379.00" width="6.4" height="59.50" fill="#0c1713" stroke="#2ea57c" stroke-width="1"/>
<rect x="893.54" y="374.30" width="6.4" height="64.20" fill="#0c1713" stroke="#2ea57c" stroke-width="1"/>
<rect x="902.58" y="388.10" width="7.4" height="50.90" fill="#1fa873"/>
<rect x="912.12" y="418.00" width="7.4" height="21.00" fill="#1fa873"/>
<rect x="922.16" y="409.00" width="6.4" height="29.50" fill="#0c1713" stroke="#2ea57c" stroke-width="1"/>
<rect x="931.20" y="425.10" width="7.4" height="13.90" fill="#1fa873"/>
<rect x="940.74" y="437.00" width="7.4" height="2.00" fill="#1fa873"/>
<rect x="950.28" y="439.00" width="7.4" height="5.80" fill="#e2494b"/>
<rect x="959.82" y="439.00" width="7.4" height="20.70" fill="#e2494b"/>
<rect x="969.36" y="439.00" width="7.4" height="23.80" fill="#e2494b"/>
<rect x="978.90" y="439.00" width="7.4" height="40.70" fill="#e2494b"/>
<rect x="988.44" y="439.00" width="7.4" height="42.20" fill="#e2494b"/>
<rect x="998.48" y="439.50" width="6.4" height="29.70" fill="#160e0f" stroke="#e0564f" stroke-width="1"/>
<rect x="1008.02" y="439.50" width="6.4" height="21.40" fill="#160e0f" stroke="#e0564f" stroke-width="1"/>
<rect x="1017.56" y="439.50" width="6.4" height="9.40" fill="#160e0f" stroke="#e0564f" stroke-width="1"/>
<rect x="1027.10" y="439.50" width="6.4" height="9.60" fill="#160e0f" stroke="#e0564f" stroke-width="1"/>
<rect x="1036.64" y="432.50" width="6.4" height="6.00" fill="#0c1713" stroke="#2ea57c" stroke-width="1"/>
<rect x="1046.18" y="430.00" width="6.4" height="8.50" fill="#0c1713" stroke="#2ea57c" stroke-width="1"/>
<rect x="1055.22" y="439.00" width="7.4" height="4.80" fill="#e2494b"/>
<rect x="1064.76" y="437.60" width="7.4" height="1.40" fill="#1fa873"/>
<rect x="1074.80" y="434.80" width="6.4" height="3.70" fill="#0c1713" stroke="#2ea57c" stroke-width="1"/>
<rect x="1083.84" y="436.00" width="7.4" height="3.00" fill="#1fa873"/>
<polyline points="105.2,822.0 126.7,777.4 152.4,726.0 170.4,677.2 185.8,615.6 201.2,564.3 219.2,513.0 237.1,471.9 252.5,451.3 267.0,439.2 286.2,430.5 297.8,428.2 305.2,428.8 314.7,430.2 324.2,431.3 333.8,432.7 343.5,434.8 353.0,437.5 362.5,445.7 372.0,454.4 382.8,462.3 391.6,465.8 401.2,468.9 410.7,470.4 420.2,469.7 429.7,468.9 439.2,466.2 448.7,462.7 458.2,457.5 467.7,448.2 477.2,436.9 486.8,422.4 495.9,408.9 505.4,394.5 512.5,383.0 527.5,355.8 535.8,337.2 544.0,324.8 553.4,315.5 563.7,314.0 573.0,317.5 585.4,326.8 597.8,343.4 610.2,357.9 622.6,372.3 634.5,388.5 643.4,400.3 655.8,413.8 668.2,425.1 680.6,434.5 688.9,439.6 696.8,442.1 705.5,440.1 715.3,434.6 725.0,425.3 734.5,413.4 744.1,405.3 754.4,401.3 763.1,402.3 772.6,407.0 782.2,414.4 791.7,421.6 801.2,429.2 810.7,436.6 820.4,444.1 829.9,449.9 839.7,453.3 849.0,454.4 858.5,451.3 868.0,445.1 877.5,437.9 887.0,429.6 896.8,421.3 906.3,415.1 916.0,411.2 925.4,408.0 934.9,406.6 944.4,406.4 954.0,407.3 963.5,409.4 973.1,412.5 982.7,417.1 992.2,422.1 1001.7,426.2 1011.2,428.9 1020.7,430.4 1030.3,431.4 1040.0,431.0 1049.5,430.2 1059.0,430.0 1068.5,429.5 1078.0,428.7 1087.5,428.3" fill="none" stroke="#e0d93a" stroke-width="1.1" stroke-linejoin="round"/>
<polyline points="71.3,822.0 76.4,803.0 85.7,792.7 103.6,759.4 124.2,708.0 142.1,672.1 154.0,643.9 162.7,605.4 173.0,538.6 181.2,479.6 190.9,461.6 199.6,438.5 202.7,437.1 212.0,424.7 220.2,409.2 229.5,401.0 238.4,397.4 248.1,402.4 258.5,407.4 267.0,403.4 277.1,416.0 286.2,412.6 295.7,421.8 305.2,431.0 314.7,434.1 324.2,436.2 333.8,438.5 343.5,441.4 353.0,451.3 362.5,468.3 372.0,483.4 382.8,496.2 391.6,483.4 401.2,483.0 410.7,474.1 420.2,464.4 429.7,463.3 439.2,455.5 448.7,450.9 458.2,434.2 467.7,408.9 477.2,390.3 483.0,380.3 498.6,351.6 511.0,322.7 523.4,291.7 531.6,264.8 534.3,257.6 544.0,265.8 554.4,282.4 564.7,308.2 575.0,335.1 585.4,362.0 595.7,389.3 602.0,398.8 612.4,409.3 622.7,423.1 639.2,437.1 647.5,450.0 658.3,462.8 668.2,464.0 677.5,458.2 687.0,462.4 696.8,455.2 700.2,443.8 705.8,430.5 715.3,408.7 724.9,388.8 735.5,366.5 744.0,371.7 755.1,385.1 763.0,402.7 772.5,423.4 782.2,440.9 789.2,447.2 795.4,451.3 801.2,458.5 810.7,468.4 820.3,472.0 829.8,474.4 839.5,466.8 849.0,459.6 853.3,452.3 858.5,438.9 868.0,417.2 877.5,411.0 887.0,397.5 897.8,388.4 907.3,390.0 916.5,401.2 925.4,392.3 934.9,398.8 944.4,405.0 954.0,411.2 963.8,419.4 973.1,423.3 982.7,434.9 992.2,442.4 1001.7,440.7 1011.2,439.3 1020.7,434.5 1030.3,435.1 1040.0,426.9 1049.5,423.3 1059.0,431.4 1068.5,428.9 1078.0,425.8 1087.5,426.2" fill="none" stroke="#cfd0d2" stroke-width="1.1" stroke-linejoin="round"/>
<line x1="190" y1="176.3" x2="1231.6" y2="467.7" stroke="#cbccce" stroke-width="1.3"/>
<line x1="611.3" y1="542.6" x2="1259.5" y2="439.3" stroke="#cbccce" stroke-width="1.3"/>
</g>
<rect x="1314.5" y="124.5" width="18" height="16" fill="none" stroke="#34363f" stroke-width="1"/><path d="M1324.4 126.2V130.4H1329M1317.2 134.3H1321.7V138.2" stroke="#8e9096" stroke-width="1" fill="none"/>
</svg>
<div class="yl" style="top:786.0px">-0.0050</div>
<div class="yl" style="top:750.5px">-0.0045</div>
<div class="yl" style="top:715.0px">-0.0040</div>
<div class="yl" style="top:679.5px">-0.0035</div>
<div class="yl" style="top:644.0px">-0.0030</div>
<div class="yl" style="top:608.5px">-0.0025</div>
<div class="yl" style="top:573.0px">-0.0020</div>
<div class="yl" style="top:537.5px">-0.0015</div>
<div class="yl" style="top:502.0px">-0.0010</div>
<div class="yl" style="top:466.5px">-0.0005</div>
<div class="yl" style="top:431.0px">0.0000</div>
<div class="yl" style="top:395.5px">0.0005</div>
<div class="yl" style="top:360.0px">0.0010</div>
<div class="yl" style="top:324.5px">0.0015</div>
<div class="yl" style="top:289.0px">0.0020</div>
<div class="yl" style="top:253.5px">0.0025</div>
<div class="yl" style="top:218.0px">0.0030</div>
<div class="yl" style="top:182.5px">0.0035</div>
<div class="yl" style="top:147.0px">0.0040</div>
<svg class="ic" style="left:85px;top:122.5px" width="13" height="14" viewBox="0 0 13 14"><path d="M2.2 10.2V6.3A4.3 4.3 0 0 1 10.8 6.3V10.2M0.8 10.4H12.2M5 12.4A1.6 1.6 0 0 0 8 12.4" stroke="#7e8188" stroke-width="1.1" fill="none"/></svg>
<div class="abs" style="left:99px;top:122.2px;font-size:12px;letter-spacing:-0.22px;line-height:15px;color:#84878e;white-space:nowrap">MACD(12,26,9)</div>
<svg class="ic" style="left:188px;top:128px" width="8" height="5" viewBox="0 0 8 5"><path d="M0.5 0.5H7.5L4 4.5Z" fill="#8d9097"/></svg>
<div class="abs" style="left:205px;top:122.2px;font-size:12px;letter-spacing:-0.22px;line-height:15px;color:#d6d7da;white-space:nowrap;-webkit-text-stroke:0.3px #d6d7da">DIF:0.0002</div>
<div class="abs" style="left:269px;top:122.2px;font-size:12px;letter-spacing:-0.22px;line-height:15px;color:#e6df3c;white-space:nowrap;-webkit-text-stroke:0.3px #e6df3c">DEA:0.0002</div>
<div class="abs" style="left:337px;top:122.2px;font-size:12px;letter-spacing:-0.22px;line-height:15px;color:#1f9d6f;white-space:nowrap">MACD:0.0{3}1</div>
<div id="blue"></div>
</div></body></html>
